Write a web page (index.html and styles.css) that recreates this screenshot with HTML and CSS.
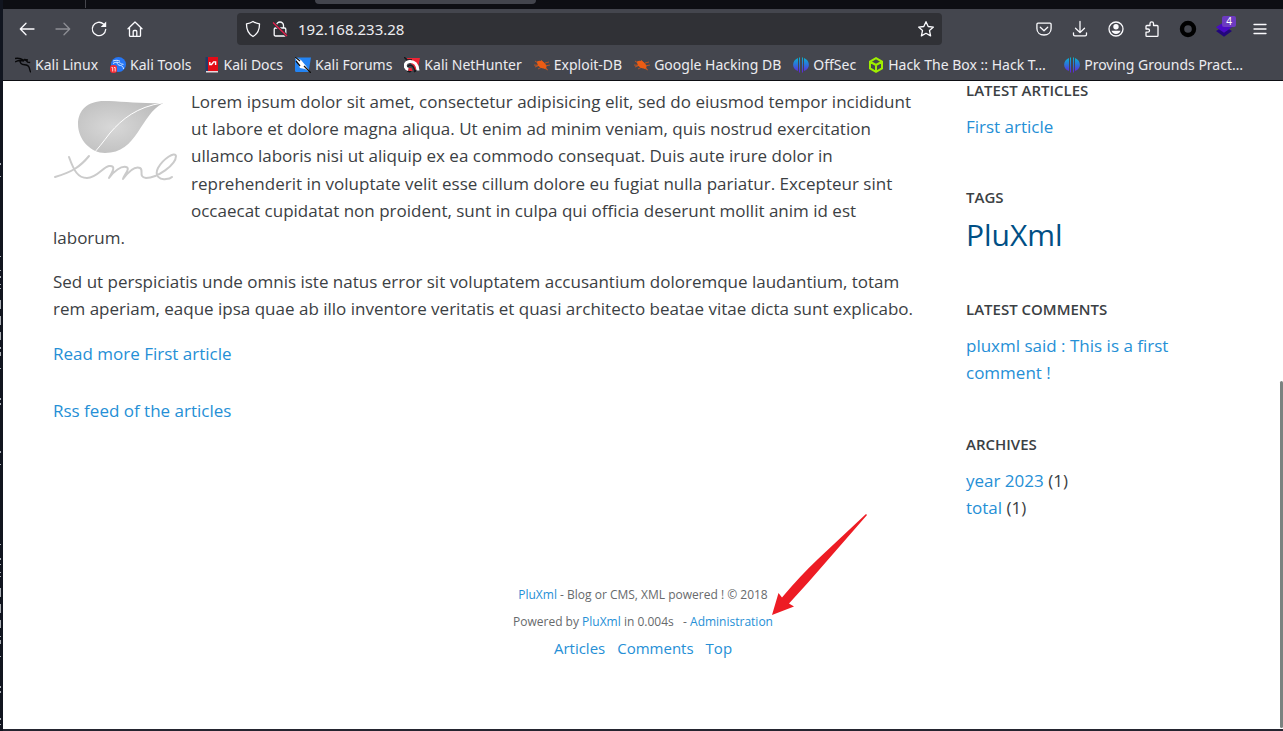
FILE: index.html
```html
<!DOCTYPE html>
<html lang="en">
<head>
<meta charset="utf-8">
<meta name="viewport" content="width=device-width, initial-scale=1">
<title>PluXml - Blog or CMS, XML powered !</title>
<link rel="stylesheet" href="styles.css">
</head>
<body>
<div class="desktop">
  <svg class="terminal-edge" width="3" height="731" viewBox="0 0 3 731" aria-hidden="true">
    <path d="M0 163h1v2H0zM0 176h1v1H0zM0 256h1v1H0zM0 270h1v1H0zM0 276h1v2H0zM0 284h1v1H0zM0 288h1v1H0zM0 300h1v9H0zM0 316h1v9H0zM0 332h1v8H0zM0 347h1v2H0zM0 352h1v4H0zM0 368h1v1H0zM0 398h1v2H0zM0 403h1v2H0zM0 451h1v2H0zM0 464h1v1H0zM0 544h1v1H0zM0 558h1v2H0zM0 564h1v1H0zM0 572h1v1H0zM0 576h1v1H0zM0 588h1v9H0zM0 604h1v9H0zM0 620h1v8H0zM0 636h1v1H0zM0 640h1v4H0zM0 656h1v1H0zM0 686h1v2H0zM0 691h1v2H0zM0 718h1v2H0zM0 724h1v1H0z" fill="#a9adb3"/>
  </svg>
  <div class="browser">
    <div class="tabstrip"><span class="tab-divider"></span><span class="tab-active"></span></div>
    <div class="toolbar">
      <button class="tool" aria-label="Back"><svg width="18" height="18" viewBox="0 0 18 18"><path d="M16 9H2.5M8 3.3L2.3 9L8 14.7" class="line"/></svg></button>
      <button class="tool" aria-label="Forward" disabled><svg width="18" height="18" viewBox="0 0 18 18"><path d="M2 9h13.5M10 3.3L15.700 9L10 14.700" class="line"/></svg></button>
      <button class="tool" aria-label="Reload"><svg width="18" height="18" viewBox="0 0 18 18"><path d="M15.700 9.500A6.700 6.700 0 1 1 13.500 4" class="line"/><path d="M16.200 1.500v5.500h-5.500z" fill="#fbfbfe"/></svg></button>
      <button class="tool" aria-label="Home"><svg width="18" height="18" viewBox="0 0 18 18"><path d="M2 8.700L9 2l7 6.700M3.500 7.800v7.700c0 .6.300.9.900.9h9.200c.6 0 .9-.3.900-.9V7.800M7.200 16v-4.600c0-.6.300-.9.900-.9h1.800c.6 0 .9.300.9.900V16" class="line"/></svg></button>
      <div class="urlbar">
        <svg width="18" height="18" viewBox="0 0 18 18" aria-hidden="true"><path d="M9 1.500c2 1.300 4.200 2 6.500 2.300.1 5.500-1.600 9.900-6.500 12.700C4.100 13.700 2.400 9.300 2.500 3.800 4.800 3.500 7 2.800 9 1.500z" class="line"/></svg>
        <svg width="18" height="18" viewBox="0 0 18 18" aria-hidden="true"><path d="M5.500 8V5.500a3.500 3.500 0 0 1 7 0V8M4.500 8h9c.8 0 1.300.5 1.300 1.300v5.400c0 .8-.5 1.300-1.300 1.300h-9c-.8 0-1.300-.5-1.300-1.300V9.300C3.200 8.500 3.700 8 4.500 8z" class="line"/><path d="M2 2.500l14 13.500" stroke="#303136" stroke-width="3"/><path d="M2 2.500l14 13.500" stroke="#e8204e" stroke-width="1.300"/></svg>
        <input class="address" type="text" value="192.168.233.28" aria-label="Address">
        <button class="star" aria-label="Bookmark this page"><svg width="18" height="18" viewBox="0 0 18 18"><path d="M9 1.700l2.200 4.800 5.200.6-3.900 3.500 1.100 5.300L9 13.300l-4.600 2.600 1.100-5.300L1.600 7.100l5.200-.6z" class="line"/></svg></button>
      </div>
      <button class="tool" aria-label="Save to Pocket"><svg width="18" height="18" viewBox="0 0 18 18"><path d="M3 3.200h12c.7 0 1.100.4 1.100 1.100V8.500c0 4-3.100 6.500-7.100 6.500S1.900 12.500 1.900 8.500V4.300c0-.7.400-1.100 1.100-1.100zM5.300 7.200L9 10.700l3.700-3.500" class="line"/></svg></button>
      <button class="tool" aria-label="Downloads"><svg width="18" height="18" viewBox="0 0 18 18"><path d="M9 1.500v11M4.500 8.200L9 12.600l4.500-4.400M2.500 12.800v1.700c0 .8.500 1.300 1.300 1.300h10.400c.8 0 1.300-.5 1.300-1.300v-1.700" class="line"/></svg></button>
      <button class="tool" aria-label="Account"><svg width="18" height="18" viewBox="0 0 18 18"><circle cx="9" cy="9" r="7" class="line"/><circle cx="9" cy="6.800" r="2.700" fill="#fbfbfe"/><path d="M4.500 10.800h9c-.4 2-2.200 3.200-4.500 3.200s-4.100-1.200-4.500-3.200z" fill="#fbfbfe"/></svg></button>
      <button class="tool" aria-label="Extensions"><svg width="18" height="18" viewBox="0 0 18 18"><path d="M3 8V6.400c0-.6.300-.9.900-.9H7V3.400c0-2.100 3.500-2.100 3.500 0v2.100h3.600c.6 0 .9.300.9.900v9c0 .6-.3.900-.9.900H3.900c-.6 0-.9-.3-.9-.9v-3.200h2c2 0 2-3.200 0-3.200H3z" class="line"/></svg></button>
      <button class="tool" aria-label="Proxy switcher"><svg width="18" height="18" viewBox="0 0 18 18"><circle cx="9" cy="9" r="6" fill="none" stroke="#000" stroke-width="4.400"/></svg></button>
      <button class="tool layered" aria-label="Wappalyzer"><svg width="18" height="18" viewBox="0 0 18 18"><path d="M1 11l3.500-2L9 11.500 13.500 9l3.500 2-8 5.700z" fill="#22067c"/><path d="M1 7.300L9 2l8 5.300-8 5.400z" fill="#4a0bc4"/></svg><span class="badge">4</span></button>
      <button class="tool" aria-label="Menu"><svg width="18" height="18" viewBox="0 0 18 18"><path d="M3 4.500h12M3 9h12M3 13.500h12" class="line"/></svg></button>
    </div>
    <nav class="bookmarks" aria-label="Bookmarks">
      <a href="#"><svg width="16" height="16" viewBox="0 0 16 16"><path d="M0 1.500c3-.5 6 0 8.500 1.500M0 5c3-1.700 6-2 9-1M5 3c-.2 3 1.500 4.500 4.500 4.700 3 .2 4.300 1.300 4.800 3.200.3 1.300.6 2.800 1.500 4.500M7 3c3-.5 4.700.3 5.700 2.200l2.500.3M9 2.500l4 .5" fill="none" stroke="#08080a" stroke-width="1.400"/></svg>Kali Linux</a>
      <a href="#"><svg width="16" height="16" viewBox="0 0 16 16"><circle cx="8.500" cy="7.500" r="7.500" fill="#2676f5"/><path d="M3 4c3-1 5-1 7 .3M3 6.500c3-2 6-1.500 8.500.5l2 .3M7 5c0 2 1 3.200 3.500 3.500 2 .3 2.800 1.500 3 3.500" fill="none" stroke="#dcecff" stroke-width="1"/><rect y="8" width="7" height="8" rx="3" fill="#f22c35"/><path d="M1.500 10.500h1.200v4M4 10.500h1.200v4" fill="none" stroke="#fff" stroke-width=".8"/></svg>Kali Tools</a>
      <a href="#"><svg width="16" height="16" viewBox="0 0 16 16"><path d="M1.500 0H4v15H1.500z" fill="#223a67"/><path d="M4 0h10v14H4z" fill="#e30b16"/><path d="M2 14h12v1.500H2z" fill="#e9d9dc"/><path d="M5.800 5v2.500h1.800l2-2.600h2v3" fill="none" stroke="#fff" stroke-width="1.400"/></svg>Kali Docs</a>
      <a href="#"><svg width="16" height="16" viewBox="0 0 16 16"><path d="M0 2C0 1 .5.500 1.500.500H16L13.500 15H2C.7 15 0 14.500 0 13.500z" fill="#2384f4"/><path d="M0 0l6 3 5 6 4 6-5-3-5-1-2-4z" fill="#fff"/><path d="M0 0l5 4M9 9l7 7M1 4l4 5" stroke="#111" stroke-width="1.300"/></svg>Kali Forums</a>
      <a href="#"><svg width="16" height="16" viewBox="0 0 16 16"><path d="M3 1h13l-2.500 12H10V9L4 4z" fill="#ed2434"/><path d="M0 0l4 4M1 7l3-4h4M3 13c1 2 3 2 4 1M10 15l5-4" fill="none" stroke="#16161a" stroke-width="1.500"/><path d="M4.500 12.500C0 11 0 5.500 5.500 4.500c5-.5 8 3 8.500 9" fill="none" stroke="#fff" stroke-width="3"/><path d="M4 10c0-3 6-3 7 5" fill="none" stroke="#1b1b20" stroke-width="1.500"/><path d="M4.500 11h3l1 3h-4z" fill="#ed2434"/></svg>Kali NetHunter</a>
      <a href="#"><svg width="16" height="16" viewBox="0 0 16 16"><path d="M3 4.500c3-2 8 0 9.500 4.500.3 2-1 3-3 2.500C5.500 11.300 3 8 3 4.500z" fill="#ed5c13"/><path d="M1 4l12 8M0 8l6 .5M4 12l4-2M7 3l3 3M11 6l4-1M11 9l5-1M10 11l4 2M1 10l5-2" stroke="#ed5c13" stroke-width=".7"/></svg>Exploit-DB</a>
      <a href="#"><svg width="16" height="16" viewBox="0 0 16 16"><path d="M3 4.500c3-2 8 0 9.500 4.500.3 2-1 3-3 2.500C5.500 11.300 3 8 3 4.500z" fill="#ed5c13"/><path d="M1 4l12 8M0 8l6 .5M4 12l4-2M7 3l3 3M11 6l4-1M11 9l5-1M10 11l4 2M1 10l5-2" stroke="#ed5c13" stroke-width=".7"/></svg>Google Hacking DB</a>
      <a href="#"><svg width="16" height="16" viewBox="0 0 16 16"><defs><linearGradient id="offsec" x1="0" y1="0" x2="0" y2="1"><stop stop-color="#08b4d0"/><stop offset=".5" stop-color="#2f6fd8"/><stop offset="1" stop-color="#6420dc"/></linearGradient></defs><path d="M5 1v13C-1.500 12-1.500 3.500 5 1zM6 .5h1v15H6zM9 .5h1v15H9zM11 1c6.500 2.500 6.500 11 0 13z" fill="url(#offsec)"/></svg>OffSec</a>
      <a href="#" class="clipped"><svg width="16" height="16" viewBox="0 0 16 16"><path d="M8 1.200l6 3.400v6.800l-6 3.400-6-3.400V4.600zM2.500 5L8 8l5.500-3M8 8v6" fill="none" stroke="#9fef00" stroke-width="2"/></svg>Hack The Box :: Hack T…</a>
      <a href="#" class="clipped"><svg width="16" height="16" viewBox="0 0 16 16"><path d="M5 1v13C-1.500 12-1.500 3.500 5 1zM6 .5h1v15H6zM9 .5h1v15H9zM11 1c6.500 2.500 6.500 11 0 13z" fill="url(#offsec)"/></svg>Proving Grounds Pract…</a>
    </nav>
    <div class="page">
      <div class="columns">
        <main class="article">
          <svg class="logo" width="124" height="100" viewBox="53 88 124 100" role="img" aria-label="PluXml">
            <defs><radialGradient id="leaf" cx=".4" cy=".5" r=".65"><stop stop-color="#d8d8d8"/><stop offset="1" stop-color="#bcbcbc"/></radialGradient></defs>
            <path d="M163 103C140 104 120 101 104 101C88 101 78 110 78 124C78 140 91 153 105 153C121 153 130 144 138 132C146 120 151 110 163 103z" fill="url(#leaf)"/>
            <path d="M162 103C137 107 122 119 110 133C103 142 98 149 91 156" fill="none" stroke="#fff" stroke-width="1"/>
            <path d="M89 156C80 167 72 172 55 177M69 157C74 171 78 178 87 178C97 178 103 167 109 166C117 165 112 173 109 178C114 171 121 166 126 167C131 168 124 175 123 179C129 171 135 166 140 168C144 170 138 177 146 178C157 178 176 165 176 156C175 151 163 159 158 168C154 176 160 180 166 179Q170 179 172 177" fill="none" stroke="#cbcbcb" stroke-width="2" stroke-linecap="round" stroke-linejoin="round"/>
          </svg>
          <p>Lorem ipsum dolor sit amet, consectetur adipisicing elit, sed do eiusmod tempor incididunt ut labore et dolore magna aliqua. Ut enim ad minim veniam, quis nostrud exercitation ullamco laboris nisi ut aliquip ex ea commodo consequat. Duis aute irure dolor in reprehenderit in voluptate velit esse cillum dolore eu fugiat nulla pariatur. Excepteur sint occaecat cupidatat non proident, sunt in culpa qui officia deserunt mollit anim id est laborum.</p>
          <p>Sed ut perspiciatis unde omnis iste natus error sit voluptatem accusantium doloremque laudantium, totam rem aperiam, eaque ipsa quae ab illo inventore veritatis et quasi architecto beatae vitae dicta sunt explicabo.</p>
          <p><a href="#">Read more First article</a></p>
          <p class="feed"><a href="#">Rss feed of the articles</a></p>
        </main>
        <aside class="sidebar">
          <section><h3>LATEST ARTICLES</h3><ul><li><a href="#">First article</a></li></ul></section>
          <section><h3>TAGS</h3><ul class="tags"><li><a href="#">PluXml</a></li></ul></section>
          <section><h3>LATEST COMMENTS</h3><ul><li><a href="#">pluxml said : This is a first comment !</a></li></ul></section>
          <section><h3>ARCHIVES</h3><ul><li><a href="#">year 2023</a> (1)</li><li><a href="#">total</a> (1)</li></ul></section>
        </aside>
      </div>
      <footer class="footer">
        <p><a href="#">PluXml</a> - Blog or CMS, XML powered ! © 2018</p>
        <p>Powered by <a href="#">PluXml</a> in 0.004s &nbsp; - <a href="#">Administration</a></p>
        <nav class="footer-links"><a href="#">Articles</a><a href="#">Comments</a><a href="#">Top</a></nav>
        <svg class="pointer" width="95" height="102" viewBox="772 515 95 102" aria-hidden="true"><path d="M772 616L778.500 594L782 598.500Q800 577 818 560L866 515L867 516L826 563Q808 584 789 604.500L794 607.500z" fill="#ed1c24"/></svg>
      </footer>
      <div class="scroll-thumb"></div>
    </div>
  </div>
</div>
</body>
</html>
```
FILE: styles.css
```css
* { box-sizing: border-box; }
body {
  margin: 0;
  font-family: "Noto Sans", sans-serif;
  color: #3b4043;
}
p, ul, h3 { margin: 0; padding: 0; }
ul { list-style: none; }
a { color: #258fd6; text-decoration: none; }
button { border: 0; padding: 0; background: none; font: inherit; }

.desktop {
  display: flex;
  height: 100vh;
  overflow: hidden;
  background: #11151f;
}
.terminal-edge { flex: none; }
.browser {
  flex: 1;
  min-width: 0;
  display: flex;
  flex-direction: column;
  border-bottom: 2px solid #242530;
}
.line {
  fill: none;
  stroke: #fbfbfe;
  stroke-width: 1.3;
  stroke-linecap: round;
  stroke-linejoin: round;
}

.tabstrip {
  display: flex;
  align-items: flex-start;
  height: 9px;
  padding-left: 82px;
  background: #0d0e13;
}
.tab-divider { width: 1px; height: 8px; background: #45464c; }
.tab-active {
  width: 221px;
  height: 4px;
  margin-left: 229px;
  border-radius: 0 0 4px 4px;
  background: #42444c;
}

.toolbar {
  display: flex;
  align-items: center;
  height: 40px;
  padding: 0 5px 0 6px;
  background: #44464e;
}
.tool {
  display: grid;
  place-items: center;
  flex: none;
  width: 36px;
  height: 32px;
}
.tool:disabled { opacity: .4; }
.layered { position: relative; }
.badge {
  position: absolute;
  top: 3px;
  right: 6px;
  width: 14px;
  height: 11px;
  border-radius: 2px;
  background: #6c3bc0;
  color: #fff;
  font-size: 10px;
  line-height: 11px;
  text-align: center;
}
.urlbar {
  flex: 1;
  display: flex;
  align-items: center;
  gap: 9px;
  height: 32px;
  margin: 0 84px;
  padding: 0 7px;
  border-radius: 4px;
  background: #303136;
}
.urlbar svg { flex: none; }
.address {
  flex: 1;
  min-width: 0;
  padding: 0;
  border: 0;
  outline: 0;
  background: none;
  color: #ececf0;
  font: 15px "Noto Sans", sans-serif;
}
.star { display: grid; }

.bookmarks {
  display: flex;
  align-items: center;
  gap: 12px;
  height: 31px;
  padding-left: 12px;
  background: #44464e;
  white-space: nowrap;
  overflow: hidden;
}
.bookmarks a {
  display: flex;
  align-items: center;
  gap: 4px;
  flex: none;
  color: #ececf0;
  font-size: 14px;
}
.bookmarks .clipped { width: 184px; }
.bookmarks svg { flex: none; }

.page {
  position: relative;
  flex: 1;
  overflow: hidden;
  border-top: 1px solid #0d0e13;
  background: #fff;
  font-family: "Open Sans", sans-serif;
  font-size: 17px;
  line-height: 1.6;
}
.columns {
  display: grid;
  grid-template-columns: minmax(0, 1fr) 267px;
  gap: 48px;
  padding: 0 50px;
}
.article { padding-top: 7px; }
.article p { margin-bottom: 17px; }
.article .feed { margin: 30px 0 0; }
.logo { float: left; margin: 0 14px 15px 0; }

.sidebar {
  display: flex;
  flex-direction: column;
  gap: 48px;
}
.sidebar h3 {
  margin-bottom: 14px;
  font-size: 15px;
  font-weight: 600;
  line-height: 18px;
}
.tags {
  padding-bottom: 3px;
  font-size: 30px;
  line-height: 29px;
}
.tags a { color: #004f85; }

.footer {
  position: relative;
  margin-top: 60px;
  color: #676a6c;
  font-size: 12px;
  line-height: 27px;
  text-align: center;
}
.footer-links {
  display: flex;
  justify-content: center;
  gap: 12px;
  font-size: 15px;
}
.pointer {
  position: absolute;
  left: calc(50% + 129px);
  bottom: 46px;
}
.scroll-thumb {
  position: absolute;
  right: 0;
  bottom: 1px;
  width: 3px;
  height: 347px;
  border-radius: 2px;
  background: #7b8280;
}
```
